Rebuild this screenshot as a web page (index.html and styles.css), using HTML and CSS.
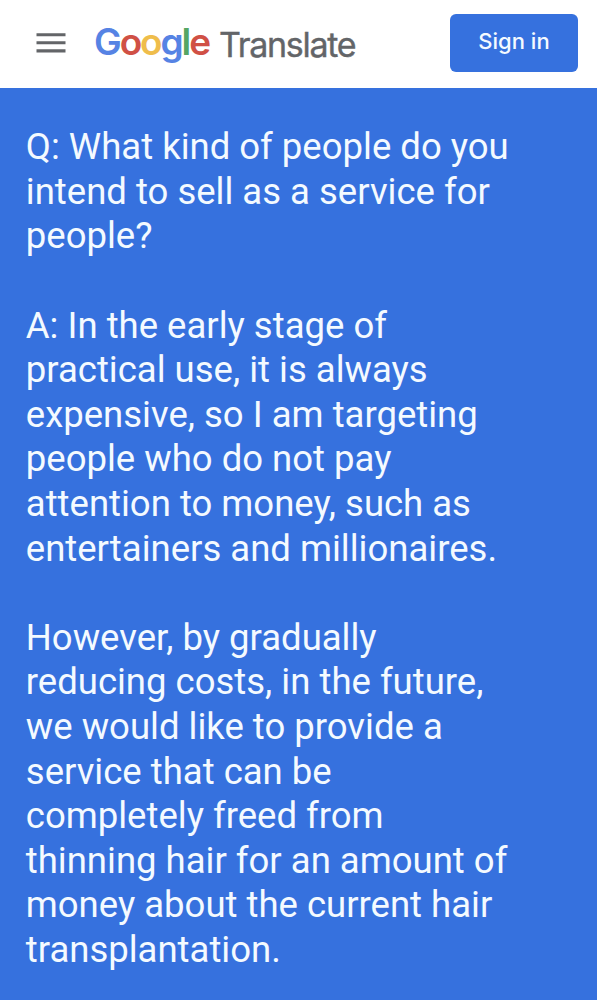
FILE: index.html
```
<!DOCTYPE html>
<html lang="en">
<head>
    <meta charset="UTF-8">
    <meta name="viewport" content="width=device-width, initial-scale=1.0">
    <title>Google Translate</title>
    <link rel="stylesheet" href="styles.css">
</head>
<body>
    <header class="header">
        <svg class="menu" viewBox="0 0 30 20" width="30" height="20">
            <path d="M0.5 1.7H29.5M0.5 9.8H29.5M0.5 17.9H29.5" stroke="#636568" stroke-width="3.1"/>
        </svg>
        <div class="logo">
            <span class="google"><span class="blue">G</span><span class="red">o</span><span class="yellow">o</span><span class="blue">g</span><span class="green">l</span><span class="red">e</span></span>
            <span class="product">Translate</span>
        </div>
        <button class="sign-in">Sign in</button>
    </header>
    <main class="translation">
        <p>Q: What kind of people do you<br>intend to sell as a service for<br>people?</p>
        <p>A: In the early stage of<br>practical use, it is always<br>expensive, so I am targeting<br>people who do not pay<br>attention to money, such as<br>entertainers and millionaires.</p>
        <p>However, by gradually<br>reducing costs, in the future,<br>we would like to provide a<br>service that can be<br>completely freed from<br>thinning hair for an amount of<br>money about the current hair<br>transplantation.</p>
    </main>
</body>
</html>
```
FILE: styles.css
```
body {
    margin: 0;
    height: 1000px;
    overflow: hidden;
    background-color: #3671de;
    font-family: Roboto, sans-serif;
}
.header {
    display: flex;
    align-items: flex-start;
    box-sizing: border-box;
    height: 87.5px;
    padding: 14px 19px 0 36px;
    background-color: #fff;
}
.menu {
    margin-top: 19px;
}
.logo {
    display: flex;
    align-items: flex-start;
    flex: 1;
    margin-left: 28px;
    font-family: Inter, sans-serif;
    line-height: 56px;
    white-space: nowrap;
}
.google {
    width: 119px;
    font-size: 37px;
    font-weight: 600;
    letter-spacing: -2.1px;
}
.blue {
    color: #5683e4;
}
.red {
    color: #d05045;
}
.yellow {
    color: #efbd4b;
}
.green {
    color: #55a663;
}
.product {
    margin: 3px 0 0 6px;
    font-size: 34px;
    letter-spacing: -1.3px;
    color: #636568;
    -webkit-text-stroke: 0.4px #636568;
}
.sign-in {
    width: 128px;
    height: 58px;
    padding: 0 0 4px;
    border: none;
    border-radius: 6px;
    background-color: #3671de;
    color: #f4faff;
    font-family: Inter, sans-serif;
    font-size: 22px;
    font-weight: 500;
    letter-spacing: 0;
}
.translation {
    padding: 37.8px 0 0 25.8px;
    color: #f4faff;
    font-size: 36.5px;
    line-height: 44.6px;
    white-space: nowrap;
}
.translation p {
    margin: 0 0 44.6px;
}
```
